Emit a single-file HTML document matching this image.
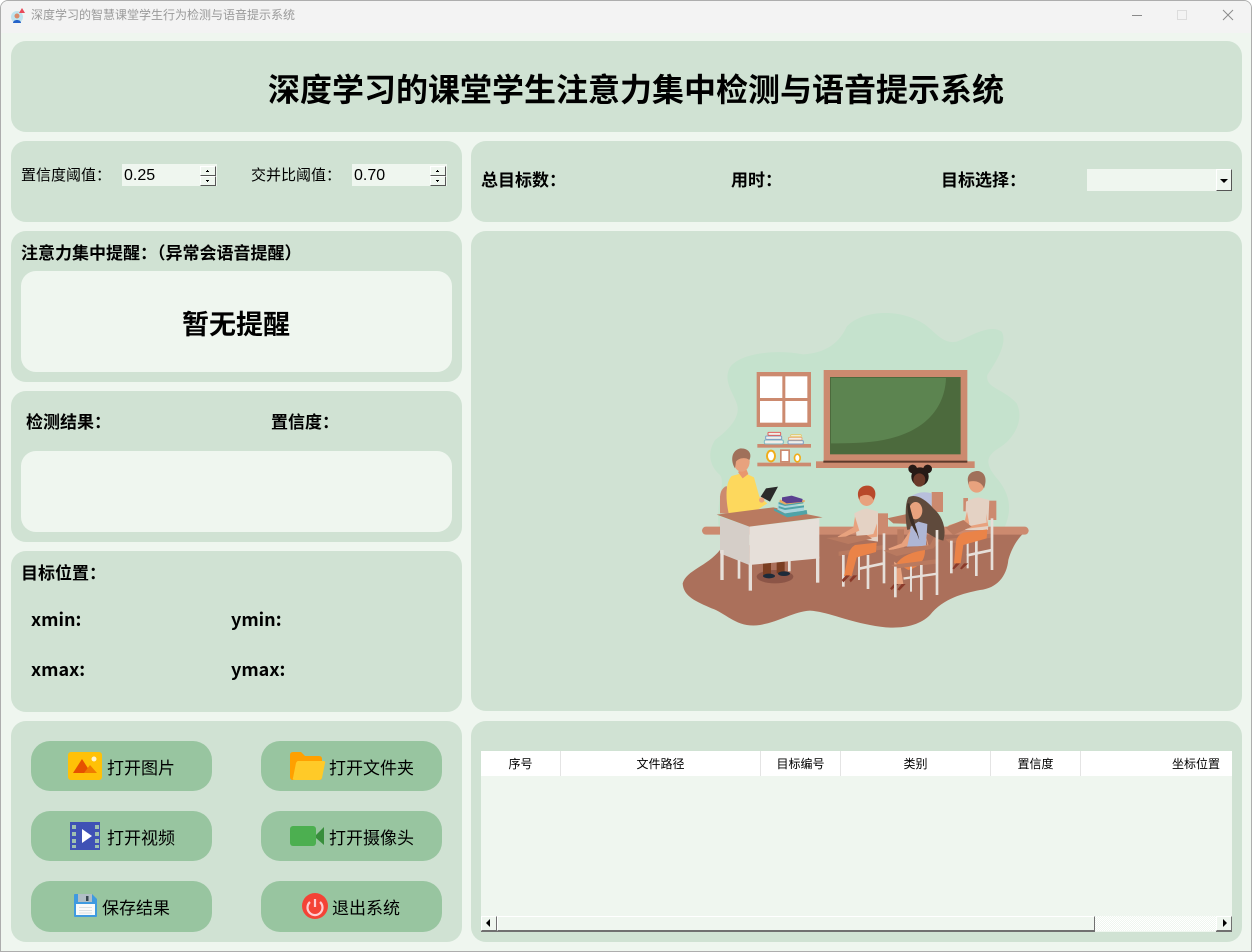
<!DOCTYPE html>
<html lang="zh"><head><meta charset="utf-8"><title>深度学习的智慧课堂学生行为检测与语音提示系统</title>
<style>
html,body{margin:0;padding:0;width:1252px;height:952px;overflow:hidden;background:#fff}
*{box-sizing:border-box}
#w{position:absolute;left:0;top:0;width:1252px;height:952px;background:#eff6ef;border:1px solid #adadad;border-radius:8px 8px 0 0;overflow:hidden;font-family:"Liberation Sans","Noto Sans CJK SC",sans-serif;color:#000}
#w>*{position:absolute}
.o{margin:-1px 0 0 -1px}
.p{background:#d0e2d3;border-radius:15px}
.i{background:#eff6ef;border-radius:15px}
.t{white-space:nowrap;line-height:24px;height:24px}
.b{font-weight:700;font-size:17px}
.n{font-size:15px}
.c{font-family:"Noto Sans CJK TC",sans-serif;line-height:0}
.l{font-family:"Noto Sans CJK SC",sans-serif;font-weight:700;font-size:18px}
.btn{background:#98c5a0;border-radius:19px;width:181px;height:50px}
.bt{font-size:17px;white-space:nowrap;line-height:24px;height:24px}
.s{background:#eff6ef;height:22px}
.sp{background:#eff6ef;border:1px solid;border-color:#fff #555 #555 #fff;width:16px;height:10px}
.th{font-size:12px;text-align:center;line-height:26px;height:25px;background:#fff;border-right:1px solid #e4e4e4}
.sb{background:#eff6ef;border:1px solid;border-color:#fff #707070 #707070 #fff;box-shadow:0 1px 0 #707070}
svg{position:absolute;left:0;top:0}
</style></head><body>
<div id="w">
<div style="left:0;top:0;width:1252px;height:32px;background:#f3f3f3"></div>
<svg class="o" width="1252" height="952" viewBox="0 0 1252 952">
<circle cx="17" cy="17" r="6" fill="#bfe3ee"/><path d="M22 8l3 5h-6z" fill="#e84a5a"/><circle cx="17" cy="16" r="2.5" fill="#d98a6a"/><path d="M13 23c0-4 8-4 8 0z" fill="#2563c9"/>
<path d="M1132 15.500h10" stroke="#8a8a8a"/><rect x="1177.500" y="10.500" width="9" height="9" fill="none" stroke="#dcdcdc"/><path d="M1223 10l10 10M1233 10l-10 10" stroke="#8a8a8a" fill="none"/>
</svg>
<div class="t" style="left:30px;top:2px;font-size:12px;color:#9a9a9a">深度学习的智慧课堂学生行为检测与语音提示系统</div>

<div class="p" style="left:10px;top:40px;width:1231px;height:91px"></div>
<div class="t" style="left:267px;top:64px;font-size:32px;font-weight:700;line-height:50px;height:50px">深度学习的课堂学生注意力集中检测与语音提示系统</div>

<div class="p" style="left:10px;top:140px;width:451px;height:81px"></div>
<div class="t n" style="left:20px;top:163px">置信度阈值<span class="c">&#xFF1A;</span></div>
<div class="s" style="left:121px;top:163px;width:95px"></div>
<div class="t" style="left:123px;top:163px;font-size:16px">0.25</div>
<div class="sp" style="left:199px;top:165px"></div><div class="sp" style="left:199px;top:175px"></div>
<div class="t n" style="left:250px;top:163px">交并比阈值<span class="c">&#xFF1A;</span></div>
<div class="s" style="left:351px;top:163px;width:95px"></div>
<div class="t" style="left:353px;top:163px;font-size:16px">0.70</div>
<div class="sp" style="left:429px;top:165px"></div><div class="sp" style="left:429px;top:175px"></div>
<svg class="o" width="1252" height="952" viewBox="0 0 1252 952"><path d="M206 171h3v1h-3zM207 170h1v1h-1zM436 171h3v1h-3zM437 170h1v1h-1zM206 180h3v1h-3zM207 181h1v1h-1zM436 180h3v1h-3zM437 181h1v1h-1z" fill="#000"/></svg>

<div class="p" style="left:470px;top:140px;width:771px;height:81px"></div>
<div class="t b" style="left:480px;top:168px">总目标数<span class="c">&#xFF1A;</span></div>
<div class="t b" style="left:730px;top:168px">用时<span class="c">&#xFF1A;</span></div>
<div class="t b" style="left:940px;top:168px">目标选择<span class="c">&#xFF1A;</span></div>
<div class="s" style="left:1086px;top:168px;width:145px"></div>
<div style="left:1215px;top:168px;width:16px;height:22px;background:#eff6ef;border:1px solid;border-color:#fff #555 #555 #fff"></div>
<div style="left:1219px;top:178px;width:0;height:0;border:4px solid transparent;border-top:4px solid #000;border-bottom:0"></div>

<div class="p" style="left:10px;top:230px;width:451px;height:151px"></div>
<div class="t b" style="left:20px;top:241px">注意力集中提醒<span class="c">&#xFF1A;</span>&#xFF08;异常会语音提醒&#xFF09;</div>
<div class="i" style="left:20px;top:270px;width:431px;height:101px"></div>
<div class="t" style="left:181px;top:304px;font-size:27px;font-weight:700;line-height:40px;height:40px">暂无提醒</div>

<div class="p" style="left:10px;top:390px;width:451px;height:151px"></div>
<div class="t b" style="left:25px;top:410px">检测结果<span class="c">&#xFF1A;</span></div>
<div class="t b" style="left:270px;top:410px">置信度<span class="c">&#xFF1A;</span></div>
<div class="i" style="left:20px;top:450px;width:431px;height:81px"></div>

<div class="p" style="left:10px;top:550px;width:451px;height:161px"></div>
<div class="t b" style="left:20px;top:561px">目标位置<span class="c">&#xFF1A;</span></div>
<div class="t l" style="left:30px;top:606px">xmin:</div>
<div class="t l" style="left:230px;top:606px">ymin:</div>
<div class="t l" style="left:30px;top:656px">xmax:</div>
<div class="t l" style="left:230px;top:656px">ymax:</div>

<div class="p" style="left:470px;top:230px;width:771px;height:480px"></div>

<svg class="o" width="1252" height="952" viewBox="0 0 1252 952">
<g transform="translate(670,300) scale(.33333)" style="filter:blur(.9px)">
<path d="M178 205C200 165 300 145 400 163C470 160 510 125 530 80C570 35 670 25 740 60C790 80 810 135 860 125C900 110 960 70 995 95C1015 130 975 190 952 225C945 265 1000 265 1040 310C1065 360 1030 420 985 445C945 470 945 495 985 540C1025 590 1025 640 1000 690L150 700C130 620 170 550 150 525C120 500 110 460 135 420C175 390 215 350 200 310C190 280 160 245 178 205Z" fill="#c5e2cd"/>
<path d="M150 750C110 800 50 810 38 850C40 890 80 905 125 925C170 940 200 985 270 975C330 965 370 935 420 932C470 935 520 960 600 975C670 990 740 985 780 945C820 895 880 880 930 870C980 865 1010 830 1015 780C1025 745 1040 720 1060 700L450 700Z" fill="#ab705b"/>
<rect x="96" y="680" width="980" height="24" rx="12" fill="#cc8a6f"/>
<!-- window -->
<rect x="260" y="216" width="163" height="165" fill="#cc8a6f"/>
<rect x="270" y="229" width="67" height="65" fill="#fff"/><rect x="346" y="229" width="66" height="65" fill="#fff"/><rect x="270" y="303" width="67" height="65" fill="#fff"/><rect x="346" y="303" width="66" height="65" fill="#fff"/>
<!-- board -->
<rect x="461" y="210" width="431" height="275" fill="#cc8a6f"/>
<rect x="480" y="231" width="392" height="232" fill="#4c6a3d"/>
<path d="M483 234H828C825 320 770 395 640 420C590 430 530 430 483 430Z" fill="#5c8450"/>
<rect x="438" y="484" width="476" height="20" fill="#cc8a6f"/><rect x="460" y="482" width="432" height="6" fill="#5d3a2c"/>
<!-- shelves -->
<rect x="262" y="432" width="161" height="11" fill="#cc8a6f"/><rect x="262" y="488" width="161" height="11" fill="#cc8a6f"/>
<rect x="283" y="420" width="57" height="12" rx="4" fill="#f0eee8" stroke="#7cb9c4" stroke-width="3"/><rect x="287" y="408" width="48" height="10" rx="3" fill="#f0eee8" stroke="#7c9cc4" stroke-width="3"/><rect x="294" y="397" width="38" height="9" rx="2" fill="#f0eee8" stroke="#e0605c" stroke-width="3"/>
<rect x="354" y="422" width="46" height="10" rx="3" fill="#f0eee8" stroke="#7c9cc4" stroke-width="3"/><rect x="356" y="412" width="40" height="8" rx="2" fill="#f0eee8" stroke="#e8a06c" stroke-width="2.500"/><rect x="362" y="404" width="32" height="6" rx="2" fill="#f0eee8" stroke="#e8c860" stroke-width="2.500"/>
<ellipse cx="303" cy="468" rx="15" ry="19" fill="#f0ad1a"/><ellipse cx="303" cy="468" rx="9" ry="13" fill="#fff"/>
<rect x="330" y="448" width="30" height="40" fill="#cc8a6f"/><rect x="335" y="453" width="20" height="30" fill="#fff"/>
<ellipse cx="382" cy="474" rx="11" ry="14" fill="#f0ad1a"/><ellipse cx="382" cy="474" rx="6" ry="9" fill="#fff"/>
<!-- teacher -->
<path d="M150 640V590Q152 565 170 558L185 640Z" fill="#cc8a6f"/>
<ellipse cx="315" cy="830" rx="55" ry="20" fill="#8c5547"/>
<rect x="279" y="780" width="24" height="45" fill="#7a3e22"/><rect x="320" y="780" width="24" height="40" fill="#7a3e22"/>
<ellipse cx="297" cy="828" rx="18" ry="7" fill="#1d2b3a"/><ellipse cx="342" cy="821" rx="18" ry="7" fill="#1d2b3a"/>
<path d="M176 640C165 590 168 545 185 528L222 518L252 532L268 590L292 610L265 628L195 640Z" fill="#fdd85d"/>
<path d="M205 518L218 535L235 522L228 505H208Z" fill="#e8976f"/>
<ellipse cx="215" cy="485" rx="24" ry="30" fill="#e8a27e"/>
<path d="M195 505C180 480 185 450 212 445C240 445 246 465 238 480C225 470 205 475 198 485Z" fill="#a0705a"/>
<path d="M272 590L288 565L324 560L300 605Z" fill="#2a2a2a"/>
<circle cx="275" cy="600" r="8" fill="#e8a27e"/>
<!-- desk -->
<path d="M150 650L238 680L238 795L150 760Z" fill="#d5cec8"/>
<path d="M238 680L448 655V775L238 795Z" fill="#e6dfd9"/>
<path d="M140 644L238 680L458 652L310 622Z" fill="#b97a60"/>
<g fill="#e6dfd9"><rect x="151" y="750" width="10" height="90"/><rect x="203" y="780" width="8" height="56"/><rect x="236" y="790" width="10" height="82"/><rect x="438" y="770" width="10" height="78"/><rect x="354" y="780" width="8" height="34"/></g>
<!-- books -->
<path d="M312 625L345 640L410 630L412 642L352 652L312 632Z" fill="#4fa3a8"/>
<path d="M324 608L402 618V632L345 640L322 628Z" fill="#a8d4dc"/>
<path d="M326 618L345 624L402 616V622L345 630L326 624ZM326 606L345 612L400 606V610L345 618L326 612Z" fill="#4fa3a8"/>
<path d="M330 598L345 606L404 600V606L345 614L328 606Z" fill="#e8a860"/>
<path d="M336 592L365 587L398 597L396 606L350 610L336 602Z" fill="#5a4090"/>
<!-- student 1 -->
<rect x="622" y="640" width="32" height="58" fill="#cc8a6f"/>
<path d="M553 640Q570 630 590 625L624 635V725L560 715Z" fill="#e4d2c4"/>
<path d="M555 650L550 682L503 710L508 718L568 692Z" fill="#e8a27e"/>
<path d="M621 670L610 702L555 712L558 720L622 710Z" fill="#e8a27e"/>
<ellipse cx="590" cy="590" rx="24" ry="28" fill="#e8a27e"/>
<path d="M568 600C555 570 575 555 595 557C620 560 620 590 610 600C605 585 590 580 570 590Z" fill="#b8492a"/>
<path d="M468 714L590 705L606 716L535 732Z" fill="#b97a60"/>
<path d="M506 755L640 735V748L506 768Z" fill="#b97a60"/>
<g fill="#e6dfd9"><rect x="516" y="765" width="8" height="95"/><rect x="590" y="765" width="8" height="102"/><rect x="638" y="700" width="8" height="150"/><rect x="564" y="760" width="6" height="80"/><rect x="565" y="795" width="75" height="8" transform="rotate(-12 600 800)"/></g>
<path d="M620 728L555 735Q538 745 534 770L522 828H545L560 772L618 756Z" fill="#ea8348"/>
<path d="M515 840L528 826H540L520 847ZM538 840L550 826H562L542 847Z" fill="#8a3a2a"/>
<!-- girl dark -->
<rect x="785" y="576" width="34" height="60" fill="#cc8a6f"/>
<circle cx="728" cy="507" r="13" fill="#261a16"/><circle cx="773" cy="507" r="13" fill="#261a16"/>
<ellipse cx="750" cy="530" rx="26" ry="28" fill="#261a16"/><ellipse cx="748" cy="540" rx="18" ry="20" fill="#6b3a2a"/>
<path d="M722 590Q750 570 785 580V625L720 620Z" fill="#b8bfdc"/>
<path d="M652 655L720 640L730 672L670 670Z" fill="#b97a60"/>
<!-- student 3 -->
<rect x="880" y="594" width="14" height="40" fill="#cc8a6f"/><rect x="955" y="602" width="24" height="58" fill="#cc8a6f"/>
<path d="M888 605Q905 595 925 592L958 600L954 690H885Z" fill="#e4d2c4"/>
<path d="M891 635L885 660L835 676L838 683L898 672Z" fill="#e8a27e"/>
<path d="M948 640L950 668L890 680L893 686L955 678Z" fill="#e8a27e"/>
<ellipse cx="920" cy="548" rx="25" ry="30" fill="#e8a27e"/>
<path d="M897 555C885 525 905 512 925 513C950 518 950 545 942 565C935 545 915 540 897 545Z" fill="#a0705a"/>
<path d="M826 682L880 660L905 680L850 705Z" fill="#b97a60"/>
<path d="M826 718L970 700V712L840 730Z" fill="#b97a60"/>
<g fill="#e6dfd9"><rect x="840" y="722" width="8" height="98"/><rect x="915" y="720" width="8" height="108"/><rect x="962" y="655" width="8" height="155"/><rect x="890" y="720" width="6" height="85"/><rect x="890" y="755" width="75" height="8" transform="rotate(-12 925 760)"/></g>
<path d="M952 688L880 698Q862 705 858 725L852 790H872L880 735L950 715Z" fill="#ea8348"/>
<path d="M847 805L858 790H870L852 808ZM870 805L882 790H895L875 808Z" fill="#8a3a2a"/>
<!-- girl long hair -->
<rect x="682" y="688" width="20" height="60" fill="#b97a60"/>
<path d="M715 592C735 580 765 595 790 625C820 650 830 690 820 722C790 715 760 690 745 680L712 690C705 660 705 610 715 592Z" fill="#5f4a3c"/>
<ellipse cx="737" cy="632" rx="20" ry="26" fill="#e8a27e"/>
<path d="M710 740L722 680L745 665L772 672L768 738Z" fill="#aeb6d4"/>
<path d="M722 690L695 730L655 746L658 752L712 738Z" fill="#e8a27e"/>
<path d="M767 705L772 735L708 748L710 754L778 745Z" fill="#e8a27e"/>
<path d="M718 610C725 650 740 680 748 720L740 700C725 680 712 650 712 610Z" fill="#3d2f26"/>
<path d="M640 752L780 735L792 712L810 722L790 745L680 768Z" fill="#b97a60"/>
<path d="M680 790C695 770 720 757 765 750C765 780 750 800 715 810Z" fill="#ea8348"/>
<path d="M672 785L692 800L700 852L680 852Z" fill="#e8a27e"/>
<path d="M660 865L672 852H685L665 870ZM682 868L695 852H707L688 872Z" fill="#8a3a2a"/>
<path d="M663 795L805 777V790L680 805Z" fill="#b97a60"/>
<g fill="#e6dfd9"><rect x="672" y="800" width="8" height="92"/><rect x="750" y="795" width="8" height="105"/><rect x="797" y="690" width="8" height="195"/><rect x="720" y="800" width="6" height="75"/><rect x="700" y="825" width="100" height="7" transform="rotate(-8 750 828)"/></g>
</g>
</svg>

<div class="p" style="left:10px;top:720px;width:451px;height:221px"></div>
<div class="btn" style="left:30px;top:740px"></div>
<div class="btn" style="left:260px;top:740px"></div>
<div class="btn" style="left:30px;top:810px"></div>
<div class="btn" style="left:260px;top:810px"></div>
<div class="btn" style="left:30px;top:880px;height:51px"></div>
<div class="btn" style="left:260px;top:880px;height:51px"></div>
<svg class="o" width="1252" height="952" viewBox="0 0 1252 952">
<rect x="68" y="752" width="34" height="28" rx="3" fill="#ffc107"/><path d="M73 773L82 759L91 773Z" fill="#e65100"/><path d="M84 773L90 765L97 773Z" fill="#ef7c00"/><circle cx="94" cy="759" r="2.500" fill="#fff3d0"/>
<path d="M290 755q0-3 3-3h8l4 4h14q3 0 3 3v18q0 3-3 3h-26q-3 0-3-3z" fill="#ffa000"/><path d="M298 761h25q3 0 2 2l-3 15q-1 2-3 2h-24q-3 0-2-2l3-15q1-2 2-2z" fill="#ffca28"/>
<rect x="70" y="822" width="30" height="28" fill="#3f51b5"/><path d="M82 829L92 836L82 843Z" fill="#fff"/>
<g fill="#9fc0b0"><rect x="72" y="825" width="4" height="4"/><rect x="72" y="832" width="4" height="4"/><rect x="72" y="839" width="4" height="4"/><rect x="72" y="845" width="4" height="3"/><rect x="95" y="825" width="4" height="4"/><rect x="95" y="832" width="4" height="4"/><rect x="95" y="839" width="4" height="4"/><rect x="95" y="845" width="4" height="3"/></g>
<rect x="290" y="826" width="26" height="20" rx="3" fill="#4caf50"/><path d="M316 835L324 827V845L316 838Z" fill="#388e3c"/>
<path d="M74 895q0-1 1-1h17l5 5v17q0 1-1 1H75q-1 0-1-1z" fill="#3f9ae0"/><rect x="78" y="894" width="14" height="8" fill="#b0bec5"/><rect x="86" y="896" width="2.500" height="5" fill="#37474f"/><rect x="76" y="904" width="19" height="11" fill="#fafafa"/><path d="M79 907.500h13M79 910.500h13M79 913h13" stroke="#cfd8dc" stroke-width=".8"/>
<circle cx="315" cy="906" r="13" fill="#f44336"/><path d="M310 902a7.500 7.500 0 1 0 10 0" fill="none" stroke="#ffcdd2" stroke-width="2.200"/><path d="M315 899v8" stroke="#ffcdd2" stroke-width="2.200"/>
</svg>
<div class="bt" style="left:106px;top:756px">打开图片</div>
<div class="bt" style="left:328px;top:756px">打开文件夹</div>
<div class="bt" style="left:106px;top:826px">打开视频</div>
<div class="bt" style="left:328px;top:826px">打开摄像头</div>
<div class="bt" style="left:101px;top:896px">保存结果</div>
<div class="bt" style="left:331px;top:896px">退出系统</div>

<div class="p" style="left:470px;top:720px;width:771px;height:221px"></div>
<div style="left:480px;top:750px;width:751px;height:181px;background:#eff6ef"></div>
<div class="th" style="left:480px;top:750px;width:80px">序号</div>
<div class="th" style="left:560px;top:750px;width:200px">文件路径</div>
<div class="th" style="left:760px;top:750px;width:80px">目标编号</div>
<div class="th" style="left:840px;top:750px;width:150px">类别</div>
<div class="th" style="left:990px;top:750px;width:90px">置信度</div>
<div class="th" style="left:1080px;top:750px;width:151px;border-right:0;text-align:right;padding-right:12px">坐标位置</div>
<div style="left:1093px;top:915px;width:122px;height:15px;background:repeating-conic-gradient(#eff6ef 0 25%,#fff 0 50%) 0 0/2px 2px"></div>
<div class="sb" style="left:480px;top:915px;width:16px;height:15px"></div>
<div class="sb" style="left:496px;top:915px;width:598px;height:15px"></div>
<div class="sb" style="left:1215px;top:915px;width:16px;height:15px"></div>
<div style="left:485px;top:918px;width:0;height:0;border:4px solid transparent;border-right:4px solid #000;border-left:0"></div>
<div style="left:1222px;top:918px;width:0;height:0;border:4px solid transparent;border-left:4px solid #000;border-right:0"></div>
</div>
</body></html>
